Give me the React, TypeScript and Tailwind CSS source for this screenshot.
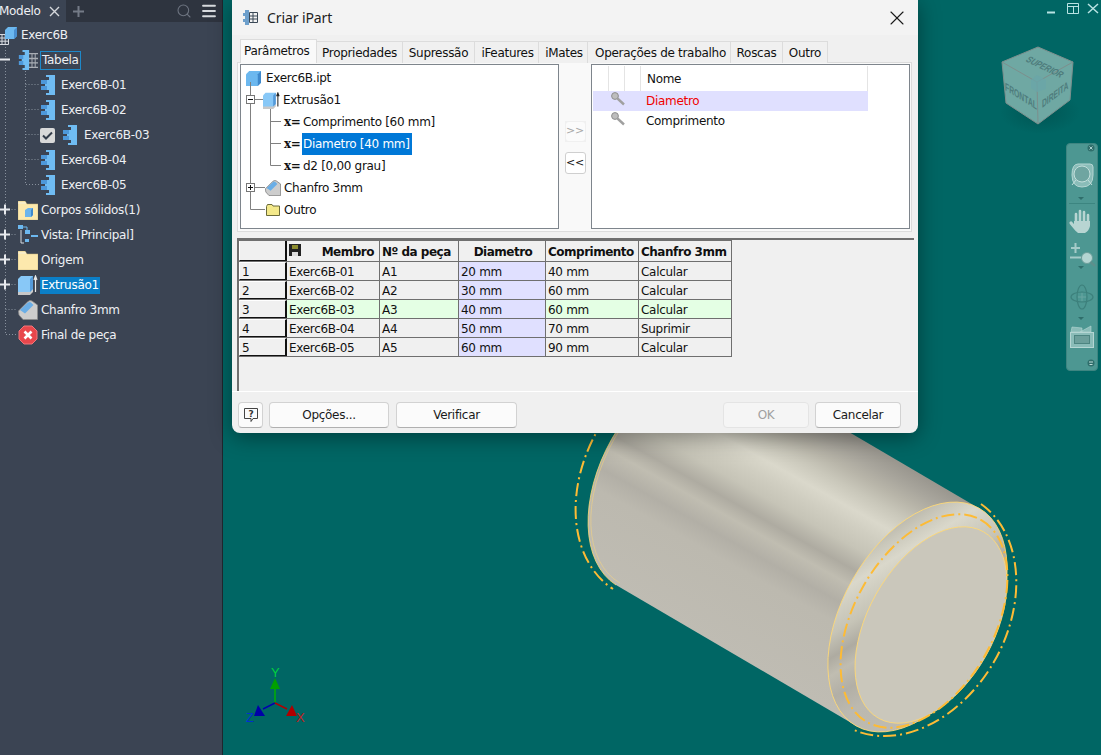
import { ReactNode } from "react"
import { Menu, Search, X } from "lucide-react"

const Puzzle = ({ className = "" }: { className?: string }) => (
  <svg width="14" height="20" viewBox="0 0 14 20" className={`shrink-0 ${className}`}>
    <path d="M5 0H14V20H5V18H8V15H0V11H4V9H0V5H8V2H5Z" fill="#6fbcf3" />
    <path d="M0 5H6V9H0ZM0 11H6V15H0Z" fill="#4d98da" />
  </svg>
)

const Folder = ({ cube }: { cube?: boolean }) => (
  <svg width="20" height="19" viewBox="0 0 20 19" className="shrink-0">
    <path d="M0 3V0H7L9 3H20V19H0Z" fill="#fde9ad" stroke="#c9b67a" strokeWidth="0.5" />
    <path d="M0 2H8" stroke="#f4f0e0" />
    {cube && (
      <>
        <path d="M7 9L10 7H15V14L13 16H7Z" fill="#6cb4ec" />
        <path d="M13 9L15 7V14L13 16Z" fill="#3f89cc" />
      </>
    )}
  </svg>
)

const TableIcon = ({ width = 11, height = 11, stroke = "#d8dce2" }: { width?: number; height?: number; stroke?: string }) => (
  <svg width={width} height={height} viewBox="0 0 11 11" preserveAspectRatio="none" className="shrink-0">
    <path d="M0.5 0.5H10.5V10.5H0.5ZM0.5 4H10.5M0.5 7.2H10.5M4 0.5V10.5M7.2 0.5V10.5" fill="none" stroke={stroke} />
  </svg>
)

const ExtrudeIcon = ({ size = 20, arrow = "#e8e8e8" }: { size?: number; arrow?: string }) => (
  <svg width={size} height={size} viewBox="0 0 20 20" className="shrink-0">
    <path d="M0 20V16L3 14H15V17L12 20Z" fill="#c8c8c8" />
    <path d="M0 4L3 1H15V14L12 17H0Z" fill="#88c8f7" />
    <path d="M12 4L15 1V14L12 17Z" fill="#5499d8" />
    <path d="M17.5 17V2M16 5L17.5 1L19 5" stroke={arrow} fill="none" strokeWidth="1.2" />
  </svg>
)

const ChamferIcon = ({ size = 20, outline = "#8d8d8d" }: { size?: number; outline?: string }) => (
  <svg width={size} height={size} viewBox="0 0 20 20" className="shrink-0">
    <path d="M0.5 11L10 1.5Q12 0 14 1L19.5 5V19.5H5L1 15Z" fill="#cdcdcd" stroke={outline} strokeWidth="0.8" />
    <path d="M2 10L10 2.5Q12 1.5 13 2.5L15.5 5L7 13.5Z" fill="#6aaee6" />
  </svg>
)

const TreeBox = ({ minus, light }: { minus?: boolean; light?: boolean }) =>
  light ? (
    <svg width="11" height="11" viewBox="0 0 11 11">
      <path d={minus ? "M0 5.5H10" : "M0 5.5H10M5 0.5V10.5"} stroke="#e8eaee" strokeWidth="2" />
    </svg>
  ) : (
    <svg width="9" height="9" viewBox="0 0 9 9">
      <rect x="0.5" y="0.5" width="8" height="8" fill="#fff" stroke="#777" />
      <path d={minus ? "M2 4.5H7" : "M2 4.5H7M4.5 2V7"} stroke="#111" />
    </svg>
  )

interface SideRow {
  label: string
  left: string
  icon: ReactNode
  expander?: "plus" | "minus"
  gap?: string
  selected?: boolean
  outlined?: boolean
}

const member = (label: string): SideRow => ({ label, left: "ml-[41px]", icon: <Puzzle />, gap: "gap-[5px]" })

const sideRows: SideRow[] = [
  {
    label: "Tabela",
    left: "ml-[18px]",
    expander: "minus",
    outlined: true,
    gap: "gap-[2px]",
    icon: (
      <span className="flex w-[20px] items-center overflow-hidden">
        <Puzzle className="ml-[-1px] mr-[-3px] scale-x-75" />
        <TableIcon width={11} height={15} stroke="#a9aeb5" />
      </span>
    ),
  },
  member("Exerc6B-01"),
  member("Exerc6B-02"),
  {
    label: "Exerc6B-03",
    left: "ml-[40px]",
    gap: "gap-[6px]",
    icon: (
      <span className="flex items-center gap-[8px]">
        <span className="flex h-[15px] w-[15px] items-center justify-center rounded-[2px] bg-[#d9d9d9]">
          <svg width="11" height="9" viewBox="0 0 11 9">
            <path d="M1 4.5L4 7.5L10 1.5" stroke="#333c4a" strokeWidth="2" fill="none" />
          </svg>
        </span>
        <Puzzle />
      </span>
    ),
  },
  member("Exerc6B-04"),
  member("Exerc6B-05"),
  { label: "Corpos sólidos(1)", left: "ml-[18px]", expander: "plus", gap: "gap-[2px]", icon: <Folder cube /> },
  {
    label: "Vista: [Principal]",
    left: "ml-[18px]",
    expander: "plus",
    gap: "gap-[2px]",
    icon: (
      <svg width="20" height="20" viewBox="0 0 20 20" className="shrink-0">
        <path d="M3 5V18H6" fill="none" stroke="#d8dce2" />
        <path d="M0 0H5V4H0ZM7 5H12V9H7ZM7 14H11V17H7ZM13 10H20V12H13Z" fill="#6cb8ef" />
        <path d="M5 2H9V5" fill="none" stroke="#6cb8ef" />
      </svg>
    ),
  },
  { label: "Origem", left: "ml-[18px]", expander: "plus", gap: "gap-[2px]", icon: <Folder /> },
  { label: "Extrusão1", left: "ml-[18px]", expander: "plus", gap: "gap-[2px]", selected: true, icon: <ExtrudeIcon /> },
  { label: "Chanfro 3mm", left: "ml-[18px]", gap: "gap-[2px]", icon: <ChamferIcon /> },
  {
    label: "Final de peça",
    left: "ml-[18px]",
    gap: "gap-[2px]",
    icon: (
      <svg width="20" height="20" viewBox="0 0 20 20" className="shrink-0">
        <path d="M6 1H14L19 6V14L14 19H6L1 14V6Z" fill="#e8474c" stroke="#f0767a" />
        <path d="M6.5 6.5L13.5 13.5M13.5 6.5L6.5 13.5" stroke="#fff" strokeWidth="2.6" />
      </svg>
    ),
  },
]

const Sidebar = () => (
  <aside className="flex w-[223px] shrink-0 flex-col border-r border-[#20262e] bg-[#3b4453] text-[12px] tracking-[-0.3px] text-[#eef0f3]">
    <div className="flex h-[22px] items-center bg-[#2e343f]">
      <div className="flex h-full w-[66px] items-center bg-[#3b4453]">
        <span className="ml-[-1px] w-[50px] text-[12px]">Modelo</span>
        <svg width="11" height="11" viewBox="0 0 11 11" className="shrink-0">
          <path d="M1 1L10 10M10 1L1 10" stroke="#d5d8dc" strokeWidth="1.4" />
        </svg>
      </div>
      <svg width="11" height="11" viewBox="0 0 11 11" className="ml-[7px] shrink-0">
        <path d="M0 5.5H11M5.5 0V11" stroke="#747b87" strokeWidth="2" />
      </svg>
      <Search size={16} strokeWidth={1.6} className="ml-auto text-[#6d7480]" />
      <Menu size={18} strokeWidth={2.4} className="ml-[8px] mr-[4px] text-[#d7dade]" />
    </div>
    <div className="relative flex flex-col">
      <svg className="absolute left-0 top-0" width="60" height="330" viewBox="0 22 60 330" stroke="#87909c" strokeDasharray="1 2" fill="none">
        <path d="M5.5 44V334.5H16M5.5 309.5H16M5.5 284.5H16M5.5 259.5H16M5.5 234.5H16M5.5 209.5H16" />
        <path d="M25.5 68V184.5H39M25.5 159.5H39M25.5 134.5H39M25.5 109.5H39M25.5 84.5H39" />
      </svg>
      <div className="relative flex h-[25px] items-center gap-[5px] ml-[-2px]">
        <span className="relative mt-[2px] flex w-[18px] items-end">
          <TableIcon />
          <svg width="12" height="12" viewBox="0 0 12 12" className="mb-[6px] ml-[-4px] shrink-0">
            <path d="M0 3L3 0H12V9L9 12H0Z" fill="#6cb8ef" />
            <path d="M9 3L12 0V9L9 12Z" fill="#4a8fd0" />
          </svg>
        </span>
        <span>Exerc6B</span>
      </div>
      {sideRows.map((row) => (
        <div key={row.label} className={`relative flex h-[25px] items-center pt-[1px] ${row.left} ${row.gap}`}>
          {row.expander && (
            <span className="absolute left-[-18px] top-[7px]">
              <TreeBox minus={row.expander === "minus"} light />
            </span>
          )}
          {row.icon}
          <span
            className={`whitespace-nowrap px-px leading-[17px] ${row.selected ? "bg-[#0b7fc7] text-white" : ""} ${
              row.outlined ? "border border-[#1e89c9] leading-[16px]" : ""
            }`}
          >
            {row.label}
          </span>
        </div>
      ))}
    </div>
  </aside>
)

const CAD_GOLD = "#fdbb35"
const CAD_THIN = "#ffd975"

const Scene = () => (
  <svg className="h-full w-full" viewBox="223 0 878 755">
    <defs>
      <linearGradient id="body" gradientUnits="userSpaceOnUse" x1="978.5" y1="508" x2="856.5" y2="726">
        <stop offset="0" stopColor="#9a978f" />
        <stop offset="0.06" stopColor="#a8a59c" />
        <stop offset="0.12" stopColor="#b8b5a9" />
        <stop offset="0.18" stopColor="#c9c7ba" />
        <stop offset="0.25" stopColor="#dad8cb" />
        <stop offset="0.31" stopColor="#d0cec1" />
        <stop offset="0.38" stopColor="#c6c4b7" />
        <stop offset="0.46" stopColor="#aeaba1" />
        <stop offset="0.52" stopColor="#c0bdb1" />
        <stop offset="0.6" stopColor="#b2afa6" />
        <stop offset="0.68" stopColor="#bcb9af" />
        <stop offset="1" stopColor="#bfbcb3" />
      </linearGradient>
      <radialGradient id="cubeShadow">
        <stop offset="0" stopColor="#00403f" stopOpacity="0.45" />
        <stop offset="1" stopColor="#00403f" stopOpacity="0" />
      </radialGradient>
    </defs>

    {/* cylinder */}
    <path d="M738 367L978.5 508A125 75 -60.6 0 1 856.5 726L616 585A125 78 -60.6 0 1 738 367Z" fill="url(#body)" />
    <g fill="none" stroke={CAD_THIN} strokeWidth="0.8">
      <path d="M616 585A125 78 -60.6 0 1 738 367" />
      <path d="M620 583A121 75 -60.6 0 1 740 370" strokeOpacity="0.6" />
    </g>
    <ellipse cx="917.5" cy="617" rx="125" ry="75" transform="rotate(-60.6 917.5 617)" fill="url(#body)" stroke={CAD_THIN} strokeWidth="0.8" />
    <ellipse cx="931" cy="625" rx="107" ry="63" transform="rotate(-60.6 931 625)" fill="#cac7bb" stroke={CAD_THIN} strokeWidth="0.8" />
    <ellipse
      cx="924"
      cy="621"
      rx="116"
      ry="70"
      transform="rotate(-60.6 924 621)"
      fill="none"
      stroke={CAD_GOLD}
      strokeWidth="2"
      strokeDasharray="13 4 2 4"
    />
    <path d="M981 504A130 96 -60.6 0 1 854 730" fill="none" stroke={CAD_GOLD} strokeWidth="2" strokeDasharray="13 4 2 4" />
    <path d="M741 363A130 96 -60.6 0 0 613 589" fill="none" stroke={CAD_GOLD} strokeWidth="2" strokeDasharray="13 4 2 4" />

    {/* window buttons */}
    <g stroke="#b9e3e3" fill="none">
      <path d="M1047 12.5H1055" strokeWidth="2" />
      <path d="M1067.5 3.5H1078.5V13.5H1067.5ZM1067.5 6.5H1078.5M1073.5 6.5V13.5" />
      <path d="M1088 4L1098 13M1098 4L1088 13" strokeWidth="1.5" />
    </g>

    {/* view cube */}
    <ellipse cx="1040" cy="112" rx="40" ry="22" fill="url(#cubeShadow)" />
    <path d="M1038 47L1073 62L1070 100L1038 124L1006 103L1002 62Z" fill="#6fa8a3" stroke="#7c8f8d" />
    <path d="M1002 62L1037 82L1073 62M1037 82L1038 124" fill="none" stroke="#7c8f8d" />
    <path d="M1037 75L1046 80V89L1037 92L1031 88V80Z" fill="#6aa5a8" opacity="0.8" />
    <g fill="#4e7c7c" fontFamily="'Liberation Sans', sans-serif" fontWeight="700">
      <text transform="matrix(.75 .36 -.8 .8 1025 61)" fontSize="9">SUPERIOR</text>
      <text transform="matrix(.68 .42 0 1.1 1005 90)" fontSize="10">FRONTAL</text>
      <text transform="matrix(.67 -.5 0 1.1 1042 108)" fontSize="10">DIREITA</text>
    </g>

    {/* axis triad */}
    <path d="M275 703V688" stroke="#00b000" strokeWidth="1.5" />
    <path d="M275 678L280 689H270Z" fill="#00a000" />
    <path d="M275 703L263 709" stroke="#0000b0" strokeWidth="1.5" />
    <path d="M258 705L265 716H254Z" fill="#0000a8" />
    <path d="M275 703L287 709" stroke="#b00000" strokeWidth="1.5" />
    <path d="M292 705L297 716H286Z" fill="#b00000" />
    <g fontFamily="'Liberation Sans', sans-serif" fontSize="13">
      <text x="271" y="677" fill="#00d040">Y</text>
      <text x="246" y="722" fill="#0030d0">Z</text>
      <text x="296" y="722" fill="#c02020">X</text>
    </g>
  </svg>
)

const NavBar = () => (
  <div className="absolute right-[3px] top-[143px] h-[228px] w-[32px] rounded-[4px] border border-[#3e8581] bg-[#4d9792]">
    <svg width="30" height="226" viewBox="1 1 30 226" fill="none">
      <circle cx="25" cy="5" r="3.5" fill="#2f6e6b" />
      <path d="M23.5 3.5L26.5 6.5M26.5 3.5L23.5 6.5" stroke="#a8d0cd" />
      <path d="M12 21H24Q27 21 27 24V32Q27 44 16 44Q6 44 6 32Q6 21 12 21Z" fill="#8abcb8" stroke="#b5d6d3" />
      <circle cx="16" cy="31" r="8" fill="#6fa5a1" stroke="#c4dfdc" />
      <path d="M10 37L6 42M22 37L26 42" stroke="#c4dfdc" />
      <path d="M12 54H18L15 57Z" fill="#2f6e6b" />
      <path d="M3 60.5H29" stroke="#3c8580" />
      <g stroke="#b8d5d2" strokeLinecap="round">
        <path d="M10 79V71M14 78V68M18 78V69M22 79V72" strokeWidth="2.6" />
        <path d="M10 86L5 80" strokeWidth="3.2" />
      </g>
      <path d="M8 78H24V83Q23 88 19 90H12Q9 88 8 84Z" fill="#b8d5d2" />
      <path d="M5 105H14M9.5 100V110" stroke="#a5cbc8" strokeWidth="2" />
      <path d="M4 114.5H15" stroke="#a5cbc8" strokeWidth="2" />
      <circle cx="21" cy="115" r="5.5" fill="#b4d5d2" stroke="#6d9f9b" />
      <path d="M24.5 119L29 123" stroke="#5d8f8c" strokeWidth="2.5" />
      <path d="M12 123H18L15 126Z" fill="#2f6e6b" />
      <ellipse cx="16" cy="154" rx="5" ry="12" stroke="#3d807c" strokeWidth="1.2" />
      <ellipse cx="16" cy="154" rx="11" ry="5" stroke="#3d807c" strokeWidth="1.2" />
      <path d="M16 150V158M12 154H20" stroke="#6ba5a1" />
      <path d="M12 174H18L15 177Z" fill="#2f6e6b" />
      <path d="M5 189L6 184L16 185V189ZM14 189L25 183V189Z" fill="#8abcb8" stroke="#b5d6d3" strokeWidth="0.6" />
      <rect x="4.5" y="189.5" width="23" height="15" fill="#8abcb8" stroke="#b5d6d3" />
      <rect x="8.5" y="192.5" width="15" height="8" fill="#6c9f9b" stroke="#4d8581" />
      <circle cx="25" cy="220" r="3.5" fill="#2f6e6b" />
      <path d="M23 219H27M23.5 221.5H26.5" stroke="#c2dedb" />
    </svg>
  </div>
)

const tabs = [
  { label: "Propriedades", className: "w-[86px]" },
  { label: "Supressão", className: "w-[72px]" },
  { label: "iFeatures", className: "w-[64px] pl-[2px]" },
  { label: "iMates", className: "w-[49px] pl-[2px]" },
  { label: "Operações de trabalho", className: "w-[143px] pl-[3px]" },
  { label: "Roscas", className: "w-[52px]" },
  { label: "Outro", className: "w-[45px]" },
]

const XVar = () => <span className="w-[18px] shrink-0 font-['DejaVu_Serif'] text-[12px] font-bold leading-none tracking-[-0.5px] text-[#111]">x=</span>

const KeyIcon = () => (
  <svg width="14" height="14" viewBox="0 0 14 14">
    <circle cx="4" cy="4" r="3.4" fill="#bdbdbd" stroke="#8e8e8e" />
    <path d="M6.5 6.5L13 12.5" stroke="#a0a0a0" strokeWidth="2.4" />
  </svg>
)

const ParamTree = () => (
  <div className="relative h-[165px] w-[319px] shrink-0 border border-[#7e858c] bg-white pt-[2px]">
    <svg className="absolute left-0 top-0" width="60" height="160" viewBox="241 65 60 160" fill="none" stroke="#808080">
      <path d="M250.5 82V209.5H265M254 99.5H265M254 187.5H265" />
      <path d="M270.5 108V165.5H281M270.5 143.5H281M270.5 121.5H281" />
    </svg>
    <span className="absolute left-[5px] top-[30px]"><TreeBox minus /></span>
    <span className="absolute left-[5px] top-[118px]"><TreeBox /></span>
    <div className="flex h-[22px] items-center gap-[5px] pl-[5px]">
      <svg width="15" height="15" viewBox="0 0 14 14">
        <path d="M0 3L3 0H14V11L11 14H0Z" fill="#6cb8ef" />
        <path d="M11 3L14 0V11L11 14Z" fill="#3f89cc" />
      </svg>
      Exerc6B.ipt
    </div>
    <div className="relative flex h-[22px] items-center gap-[3px] pl-[22px]">
      <ExtrudeIcon size={17} arrow="#222" />
      Extrusão1
    </div>
    {["Comprimento [60 mm]", "Diametro [40 mm]", "d2 [0,00 grau]"].map((param) => (
      <div key={param} className="relative flex h-[22px] items-center pl-[43px]">
        <XVar />
        <span className={`flex h-[22px] items-center pl-[1px] ${param.startsWith("Diametro") ? "w-[110px] bg-[#0078d7] text-white" : ""}`}>{param}</span>
      </div>
    ))}
    <div className="relative flex h-[22px] items-center gap-[3px] pl-[24px]">
      <ChamferIcon size={16} outline="#666" />
      Chanfro 3mm
    </div>
    <div className="relative flex h-[22px] items-center gap-[4px] pl-[25px]">
      <svg width="14" height="12" viewBox="0 0 14 12">
        <path d="M0.5 2.5L1.5 0.5H6L7 2H13.5V11.5H0.5Z" fill="#f4e98a" stroke="#6b6b3a" />
      </svg>
      Outro
    </div>
  </div>
)

const columns = "grid w-[493px] grid-cols-[48px_93px_79px_87px_93px_93px] border-b border-[#6f6f6f]"
const cell = "flex items-center border-r border-[#6f6f6f] pl-[2px] pt-[2px] leading-none"

const members = [
  { id: 1, name: "Exerc6B-01", part: "A1", dia: "20 mm", len: "40 mm", chamfer: "Calcular" },
  { id: 2, name: "Exerc6B-02", part: "A2", dia: "30 mm", len: "60 mm", chamfer: "Calcular" },
  { id: 3, name: "Exerc6B-03", part: "A3", dia: "40 mm", len: "60 mm", chamfer: "Calcular" },
  { id: 4, name: "Exerc6B-04", part: "A4", dia: "50 mm", len: "70 mm", chamfer: "Suprimir" },
  { id: 5, name: "Exerc6B-05", part: "A5", dia: "60 mm", len: "90 mm", chamfer: "Calcular" },
]

const MemberGrid = () => (
  <div className="ml-[5px] mt-[6px] h-[153px] w-[677px] border-l-2 border-t-2 border-[#6f6f6f]">
    <div className={`${columns} h-[22px] border-t font-bold tracking-[-0.5px]`}>
      <div className="border-b border-l border-r-2 border-[#111] border-l-white" />
      <div className={`${cell} relative justify-end pr-[5px]`}>
        <svg className="absolute left-[2px] top-[3px]" width="12" height="12" viewBox="0 0 12 12">
          <path d="M0 0H12V12H0Z" fill="#222" />
          <path d="M3 1H9V5H3Z" fill="#8b8b2e" />
          <path d="M3 8H9V12H3Z" fill="#ddd" />
        </svg>
        Membro
      </div>
      <div className={cell}>Nº da peça</div>
      <div className={`${cell} justify-center pl-0`}>Diametro</div>
      <div className={cell}>Comprimento</div>
      <div className={cell}>Chanfro 3mm</div>
    </div>
    {members.map((row) => {
      const tint = row.id === 3 ? "bg-[#e4ffe4]" : ""
      return (
        <div key={row.id} className={`${columns} h-[19px]`}>
          <div className="flex items-center border-b border-l border-r-2 border-t border-[#111] border-l-white border-t-white pl-[2px] pt-[1px] leading-none">{row.id}</div>
          <div className={`${cell} ${tint}`}>{row.name}</div>
          <div className={`${cell} ${tint}`}>{row.part}</div>
          <div className={`${cell} bg-[#e0e0ff]`}>{row.dia}</div>
          <div className={`${cell} ${tint}`}>{row.len}</div>
          <div className={`${cell} ${tint}`}>{row.chamfer}</div>
        </div>
      )
    })}
  </div>
)

const FooterBtn = ({ children, width, disabled }: { children: ReactNode; width: string; disabled?: boolean }) => (
  <button
    type="button"
    className={`flex h-[26px] items-center justify-center rounded-[4px] border ${width} ${
      disabled ? "border-[#e4e4e4] bg-[#f5f5f5] text-[#a0a0a0]" : "border-[#d2d2d2] border-b-[#b0b0b0] bg-[#fbfbfb] text-[#1a1a1a]"
    }`}
  >
    {children}
  </button>
)

const Dialog = () => (
  <div className="absolute left-[9px] top-0 h-[433px] w-[686px] overflow-hidden rounded-b-lg bg-[#f0f0f0] text-[12px] tracking-[-0.3px] text-[#111] shadow-[0_4px_22px_rgba(0,0,0,0.4)]">
    <div className="flex h-[35px] items-center bg-[#f3f3f3] pl-[11px] pr-[9px]">
      <svg width="15" height="15" viewBox="0 0 15 15">
        <path d="M2 0H6V15H2V12H0V9H2V6H0V3H2Z" fill="#6d9fcb" />
        <path d="M6.5 2.5H14.5V12.5H6.5ZM6.5 6H14.5M6.5 9H14.5M10 2.5V12.5" fill="none" stroke="#3a4856" />
      </svg>
      <span className="ml-[9px] font-['Noto_Sans'] text-[14px] tracking-[-0.1px] text-[#222]">Criar iPart</span>
      <X size={24} strokeWidth={1.1} className="ml-auto text-[#1a1a1a]" />
    </div>
    <div className="relative z-10 mt-[4px] flex h-[24px] items-end pl-[8px]">
      <div className="flex h-[24px] w-[77px] items-start border border-b-0 border-[#dcdcdc] bg-[#f9f9f9] pl-[3px] pt-[2px]">Parâmetros</div>
      {tabs.map((tab) => (
        <div key={tab.label} className={`flex h-[22px] items-center justify-center border-r border-t border-[#dcdcdc] bg-[#f0f0f0] ${tab.className}`}>
          {tab.label}
        </div>
      ))}
    </div>
    <div className="ml-[5px] mt-[-1px] flex h-[170px] w-[675px] border border-[#dcdcdc] bg-[#f9f9f9] pl-[2px] pt-[1px]">
      <ParamTree />
      <div className="flex w-[32px] shrink-0 flex-col items-center pt-[57px]">
        <div className="flex h-[21px] w-[21px] items-center justify-center bg-[#f0f0f0]">
          <span className="flex h-[19px] w-[19px] items-center justify-center rounded-[3px] bg-[#fbfbfb] text-[11px] text-[#a8a8a8]">&gt;&gt;</span>
        </div>
        <span className="mt-[10px] flex h-[22px] w-[21px] items-center justify-center rounded-[3px] border border-[#cfcfcf] bg-white text-[11px]">&lt;&lt;</span>
      </div>
      <div className="h-[165px] w-[319px] shrink-0 border border-[#7e858c] bg-white pl-px pt-[1px]">
        <div className="flex h-[25px] w-[275px]">
          <span className="w-[16px] border-r border-[#e4e4e4]" />
          <span className="w-[16px] border-r border-[#e4e4e4]" />
          <span className="w-[16px] border-r border-[#e4e4e4]" />
          <span className="flex flex-1 items-center border-r border-[#e4e4e4] pl-[6px]">Nome</span>
        </div>
        <div className="flex h-[20px] w-[275px] items-center bg-[#e0e0ff]">
          <span className="ml-[18px] mb-[4px] w-[35px]"><KeyIcon /></span>
          <span className="text-[#f00000]">Diametro</span>
        </div>
        <div className="flex h-[20px] w-[275px] items-center">
          <span className="ml-[18px] mb-[4px] w-[35px]"><KeyIcon /></span>
          <span>Comprimento</span>
        </div>
      </div>
    </div>
    <MemberGrid />
    <div className="flex border-t border-white pl-[6px] pr-[17px] pt-[10px]">
      <FooterBtn width="w-[25px]">
        <svg width="16" height="16" viewBox="0 0 16 16" fill="none">
          <path d="M1.5 1.5H14.5V11.5H10L8 14.5V11.5H1.5Z" stroke="#444" />
          <text x="5.5" y="10" fontSize="9" fontWeight="700" fill="#333" fontFamily="'DejaVu Sans', sans-serif">?</text>
        </svg>
      </FooterBtn>
      <span className="ml-[6px]"><FooterBtn width="w-[120px]">Opções...</FooterBtn></span>
      <span className="ml-[7px]"><FooterBtn width="w-[121px]">Verificar</FooterBtn></span>
      <span className="ml-auto"><FooterBtn width="w-[86px]" disabled>OK</FooterBtn></span>
      <span className="ml-[6px]"><FooterBtn width="w-[86px]">Cancelar</FooterBtn></span>
    </div>
  </div>
)

export default function App() {
  return (
    <div className="flex h-[755px] w-[1101px] overflow-hidden bg-[#006664] font-['DejaVu_Sans',sans-serif]">
      <Sidebar />
      <main className="relative flex-1">
        <Scene />
        <Dialog />
        <NavBar />
      </main>
    </div>
  )
}
